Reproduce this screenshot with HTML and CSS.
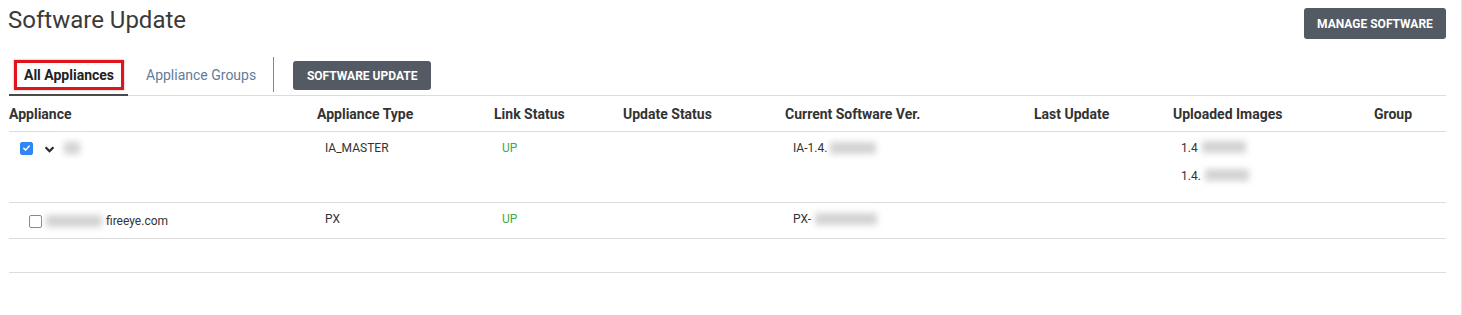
FILE: index.html
```html
<!DOCTYPE html>
<html>
<head>
<meta charset="utf-8">
<link rel="stylesheet" href="styles.css">
</head>
<body>
<div class="page">
  <div class="topbar">
    <h1 class="title">Software Update</h1>
    <button class="btn btn-manage">MANAGE SOFTWARE</button>
  </div>
  <div class="tabs">
    <div class="tab tab-active"><span class="tab-box">All Appliances</span></div>
    <div class="tab tab-link">Appliance Groups</div>
    <div class="tab-sep"></div>
    <button class="btn btn-update">SOFTWARE UPDATE</button>
  </div>
  <div class="table">
    <div class="row head">
      <div>Appliance</div>
      <div>Appliance Type</div>
      <div>Link Status</div>
      <div>Update Status</div>
      <div>Current Software Ver.</div>
      <div>Last Update</div>
      <div>Uploaded Images</div>
      <div>Group</div>
    </div>
    <div class="row body r1">
      <div class="cell-app">
        <span class="cb cb-on"><svg viewBox="0 0 12 12" width="12" height="12"><path d="M3 6.2 L5.1 8.3 L9 3.8" fill="none" stroke="#fff" stroke-width="1.6" stroke-linecap="round" stroke-linejoin="round"/></svg></span>
        <svg class="chev" viewBox="0 0 12 8" width="11" height="7"><path d="M1.5 1.5 L6 6 L10.5 1.5" fill="none" stroke="#2b2b2b" stroke-width="2.6" stroke-linejoin="miter"/></svg>
        <span class="blur b-name"></span>
      </div>
      <div class="cell">IA_MASTER</div>
      <div class="cell up">UP</div>
      <div class="cell"></div>
      <div class="cell">IA-1.4.<span class="blur b-ver"></span></div>
      <div class="cell"></div>
      <div class="cell imgs">
        <div class="img-line">1.4<span class="blur b-img"></span></div>
        <div class="img-line">1.4.<span class="blur b-img"></span></div>
      </div>
      <div class="cell"></div>
    </div>
    <div class="row body r2">
      <div class="cell-app sub">
        <span class="cb"></span>
        <span class="blur b-host"></span><span>fireeye.com</span>
      </div>
      <div class="cell">PX</div>
      <div class="cell up">UP</div>
      <div class="cell"></div>
      <div class="cell">PX-<span class="blur b-ver2"></span></div>
      <div class="cell"></div>
      <div class="cell"></div>
      <div class="cell"></div>
    </div>
    <div class="row empty"></div>
  </div>
</div>
</body>
</html>
```

FILE: styles.css
```css
html, body {
  margin: 0;
  padding: 0;
  background: #ffffff;
}
body {
  font-family: Roboto, "Liberation Sans", Arial, sans-serif;
  color: #333;
}
.page {
  width: 1437px;
  height: 315px;
  padding: 0 15px 0 9px;
  border-right: 1px solid #e2e2e2;
  box-sizing: content-box;
}
.topbar {
  display: flex;
  justify-content: space-between;
  align-items: flex-start;
  height: 54px;
}
.title {
  margin: 6px 0 0 -1px;
  font-size: 24px;
  font-weight: 400;
  color: #3a3a3a;
  line-height: 28px;
}
.btn {
  background: #535a63;
  color: #fff;
  border: none;
  border-radius: 3px;
  font-family: Roboto, "Liberation Sans", Arial, sans-serif;
  font-weight: 700;
  font-size: 12px;
  padding: 0;
  cursor: pointer;
}
.btn-manage {
  margin-top: 8px;
  width: 142px;
  height: 31px;
}
.tabs {
  display: flex;
  align-items: center;
  height: 41px;
  border-bottom: 1px solid #dcdcdc;
}
.tab {
  height: 41px;
  display: flex;
  align-items: center;
  font-size: 14px;
  box-sizing: border-box;
}
.tab-active {
  width: 119px;
  padding-left: 5px;
  border-bottom: 2px solid #4a4a4a;
  margin-bottom: -1px;
  height: 42px;
  padding-top: 1px;
}
.tab-box {
  display: inline-block;
  border: 3px solid #e0141b;
  padding: 4px 7px 4px 7px;
  font-weight: 700;
  color: #222;
  line-height: 16px;
  box-shadow: 0 0 2px rgba(0,0,0,0.35);
}
.tab-link {
  padding: 0 17px 0 18px;
  color: #5f7d9c;
}
.tab-sep {
  width: 1px;
  height: 35px;
  background: #888;
}
.btn-update {
  margin-left: 19px;
  width: 138px;
  height: 29px;
  margin-top: 2px;
}
.row {
  display: grid;
  grid-template-columns: 308px 177px 129px 162px 249px 139px 201px 72px;
  border-bottom: 1px solid #dcdcdc;
}
.head {
  height: 35px;
  align-items: center;
  font-weight: 700;
  font-size: 14px;
  color: #333;
}
.body {
  font-size: 12px;
  color: #333;
  align-items: start;
}
.body .cell {
  padding: 9px 0 0 8px;
  line-height: 14px;
  display: flex;
  align-items: center;
}
.r1 { height: 70px; }
.r2 { height: 35px; }
.empty { height: 33px; }
.cell-app {
  display: flex;
  align-items: center;
  padding: 8px 0 0 11px;
  height: 16px;
}
.cell-app.sub {
  padding: 10px 0 0 20px;
  height: 16px;
}
.cb {
  width: 11px;
  height: 11px;
  border: 1px solid #8a8a8a;
  border-radius: 2px;
  background: #fff;
  display: inline-flex;
  align-items: center;
  justify-content: center;
  box-sizing: content-box;
}
.cb-on {
  background: #2f86f6;
  border-color: #2f86f6;
}
.chev {
  margin-left: 11px;
  margin-top: 2px;
}
.blur {
  display: inline-block;
  background: #d3d3d3;
  filter: blur(3px);
  height: 12px;
}
.b-name { width: 16px; margin-left: 9px; }
.b-host { width: 56px; margin-left: 4px; margin-right: 4px; }
.b-ver { width: 46px; margin-left: 3px; }
.b-ver2 { width: 62px; margin-left: 4px; }
.b-img { width: 44px; margin-left: 4px; }
.up { color: #3ea84c; }
.imgs {
  flex-direction: column;
  align-items: flex-start !important;
}
.img-line {
  height: 28px;
  display: flex;
  align-items: flex-start;
}
```
